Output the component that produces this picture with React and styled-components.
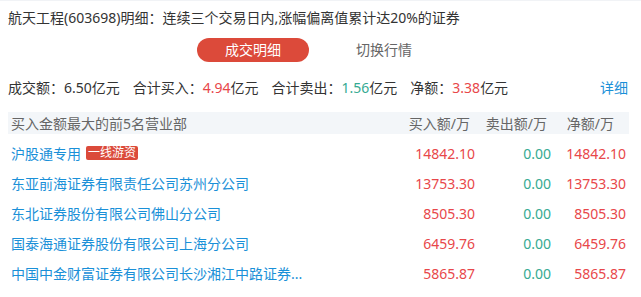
import React from "react";
import styled, { createGlobalStyle } from "styled-components";

const GlobalStyle = createGlobalStyle`
  html, body { margin: 0; padding: 0; background: #fff; }
  body { font-family: "Noto Sans", "Noto Sans CJK SC", sans-serif; color: #333; }
`;

const Page = styled.div`
  width: 641px;
  box-sizing: border-box;
  padding: 0 12px 0 8px;
  border-top: 1px solid #f1f3f6;
`;

const Title = styled.div`
  height: 33px;
  line-height: 33px;
  font-size: 14px;
  color: #333;
  white-space: nowrap;
`;

const Tabs = styled.div`
  display: flex;
  gap: 19px;
  padding-left: 189px;
  margin-top: 4px;
`;

const Tab = styled.div`
  width: 112px;
  height: 24px;
  line-height: 24px;
  border-radius: 12px;
  text-align: center;
  font-size: 14px;
  background: ${(p) => (p.$active ? "#dc4a3a" : "transparent")};
  color: ${(p) => (p.$active ? "#fff" : "#666")};
`;

const Summary = styled.div`
  display: flex;
  align-items: center;
  gap: 13px;
  height: 24px;
  margin-top: 13px;
  font-size: 14px;
  color: #333;
`;

const SumItem = styled.span`
  white-space: nowrap;
`;

const Num = styled.span`
  color: ${(p) => p.$c};
`;

const More = styled.span`
  margin-left: auto;
  margin-right: 1px;
  color: #1a90d8;
`;

const Grid = styled.div`
  display: grid;
  grid-template-columns: 1fr 76px 76px 75px;
  align-items: center;
  padding: 0 3px;
  font-size: 14px;
`;

const Header = styled(Grid)`
  margin-top: 13px;
  height: 22px;
  background: #f3f6f9;
  color: #666;
`;

const HeadCell = styled.div`
  text-align: right;
  padding-right: ${(p) => p.$pr || 0}px;
  white-space: nowrap;
`;

const Row = styled(Grid)`
  height: 30px;
  &:first-of-type { margin-top: 4px; }
`;

const Rows = styled.div``;

const Name = styled.div`
  display: flex;
  align-items: center;
  gap: 5px;
  color: #1a90d8;
  white-space: nowrap;
  overflow: hidden;
`;

const Badge = styled.span`
  display: inline-block;
  height: 14px;
  line-height: 14px;
  padding: 0 2px;
  border-radius: 2px;
  background: #db4a3a;
  color: #fff;
  font-size: 12px;
`;

const Cell = styled.div`
  text-align: right;
  color: ${(p) => p.$c};
  white-space: nowrap;
`;

const RED = "#e8474a";
const GREEN = "#35aa92";

const data = [
  { name: "沪股通专用", badge: "一线游资", buy: "14842.10", sell: "0.00", net: "14842.10" },
  { name: "东亚前海证券有限责任公司苏州分公司", buy: "13753.30", sell: "0.00", net: "13753.30" },
  { name: "东北证券股份有限公司佛山分公司", buy: "8505.30", sell: "0.00", net: "8505.30" },
  { name: "国泰海通证券股份有限公司上海分公司", buy: "6459.76", sell: "0.00", net: "6459.76" },
  { name: "中国中金财富证券有限公司长沙湘江中路证券...", buy: "5865.87", sell: "0.00", net: "5865.87" },
];

export default function App() {
  return (
    <>
      <GlobalStyle />
      <Page>
        <Title>航天工程(603698)明细：连续三个交易日内,涨幅偏离值累计达20%的证券</Title>
        <Tabs>
          <Tab $active>成交明细</Tab>
          <Tab>切换行情</Tab>
        </Tabs>
        <Summary>
          <SumItem>成交额：6.50亿元</SumItem>
          <SumItem>合计买入：<Num $c={RED}>4.94</Num>亿元</SumItem>
          <SumItem>合计卖出：<Num $c={GREEN}>1.56</Num>亿元</SumItem>
          <SumItem>净额：<Num $c={RED}>3.38</Num>亿元</SumItem>
          <More>详细</More>
        </Summary>
        <Header>
          <HeadCell style={{ textAlign: "left" }}>买入金额最大的前5名营业部</HeadCell>
          <HeadCell $pr={5}>买入额/万</HeadCell>
          <HeadCell $pr={4}>卖出额/万</HeadCell>
          <HeadCell $pr={12}>净额/万</HeadCell>
        </Header>
        <Rows>
          {data.map((d) => (
            <Row key={d.name}>
              <Name>
                {d.name}
                {d.badge && <Badge>{d.badge}</Badge>}
              </Name>
              <Cell $c={RED}>{d.buy}</Cell>
              <Cell $c={GREEN}>{d.sell}</Cell>
              <Cell $c={RED}>{d.net}</Cell>
            </Row>
          ))}
        </Rows>
      </Page>
    </>
  );
}
